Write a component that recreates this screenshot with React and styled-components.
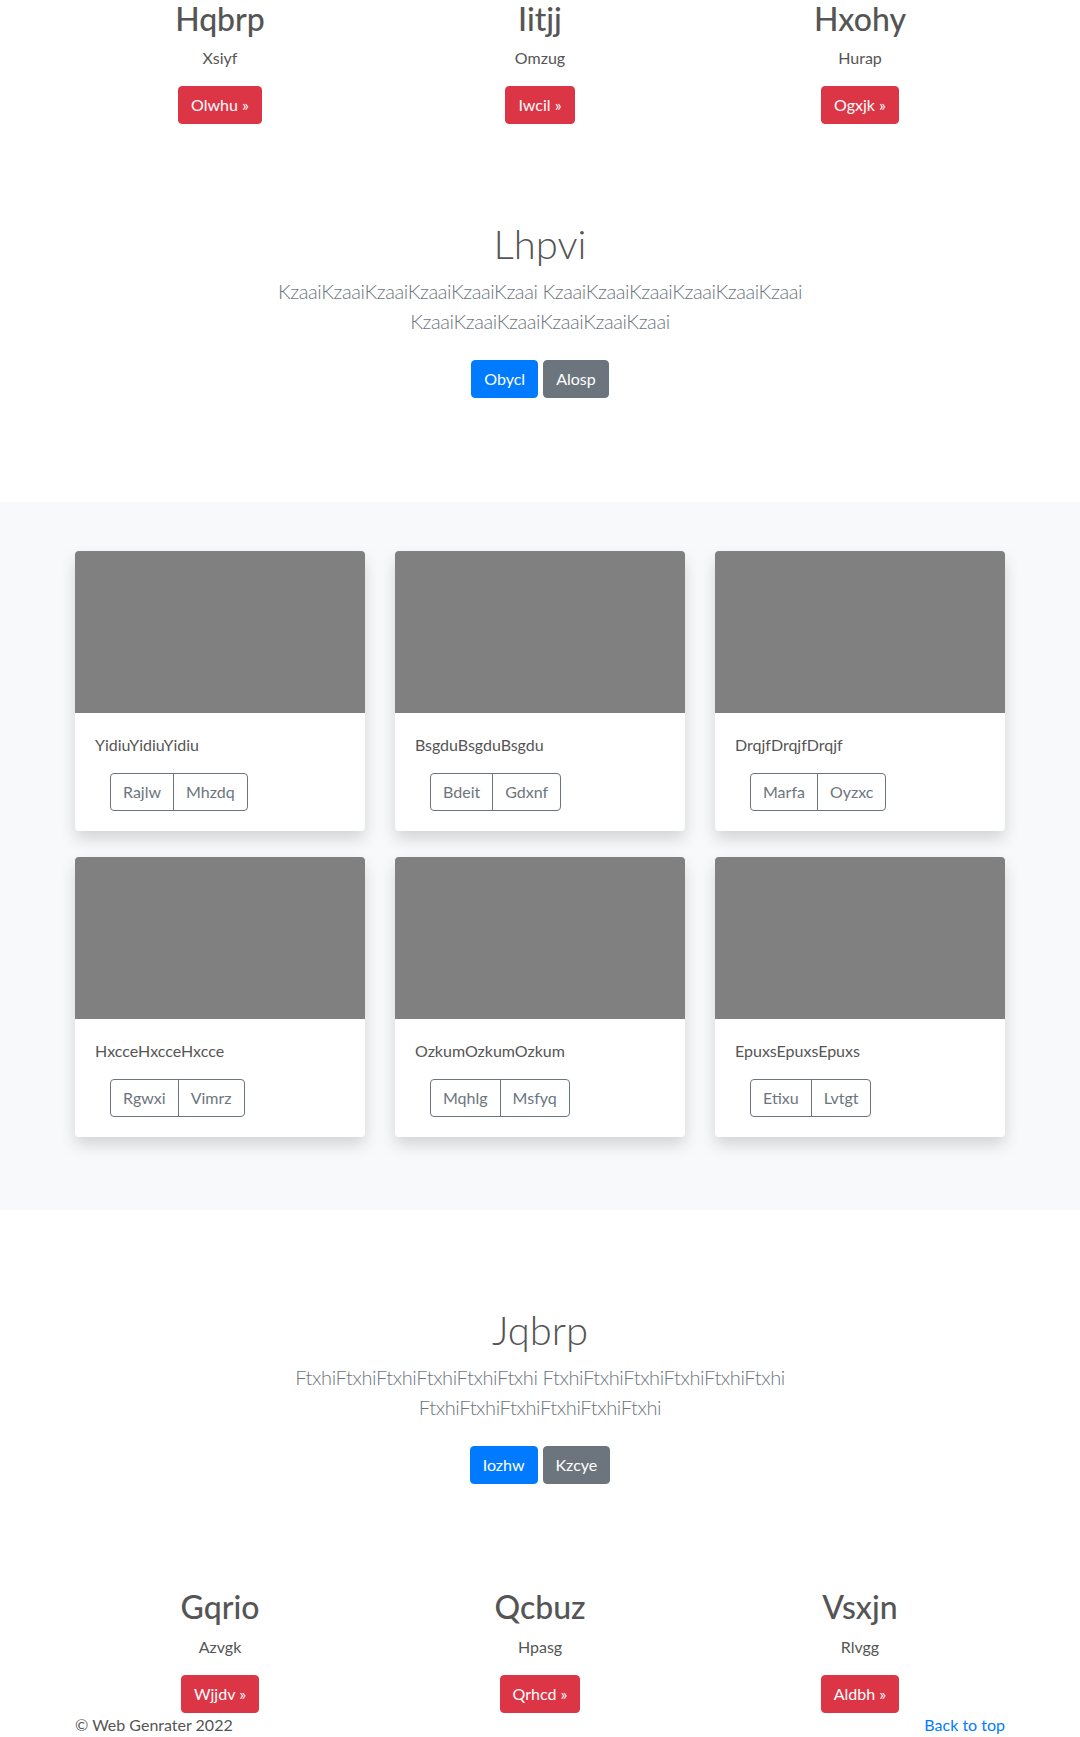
import styled, { createGlobalStyle } from "styled-components";

const GlobalStyle = createGlobalStyle`
  * { box-sizing: border-box; }
  body {
    margin: 0;
    font-family: "Lato", "Open Sans", sans-serif;
    font-size: 16px;
    line-height: 1.5;
    color: #555;
    background: #fff;
  }
`;

const Container = styled.div`
  width: 930px;
  margin: 0 auto;
`;

const FeatureRow = styled(Container)`
  display: grid;
  grid-template-columns: repeat(3, 1fr);
  column-gap: 30px;
  text-align: center;
  margin-bottom: ${(p) => p.$bottom || 0}px;
`;

const Feature = styled.div`
  display: flex;
  flex-direction: column;
  align-items: center;
`;

const FeatureTitle = styled.h2`
  margin: 0 0 8px;
  font-size: 32px;
  font-weight: 500;
  line-height: 1.2;
  color: #555;
`;

const FeatureText = styled.p`
  margin: 0 0 16px;
`;

const Button = styled.a`
  display: inline-block;
  padding: 6px 12px;
  font-size: 16px;
  line-height: 24px;
  border: 1px solid ${(p) => p.$color};
  border-radius: 4px;
  background: ${(p) => p.$color};
  color: #fff;
  text-decoration: none;
  cursor: pointer;
`;

const Jumbo = styled.section`
  padding: ${(p) => p.$top}px 0 104px;
  text-align: center;
`;

const JumboTitle = styled.h1`
  margin: 0 0 8px;
  font-size: 40px;
  font-weight: 300;
  line-height: 1.2;
  color: #555;
`;

const Lead = styled.p`
  max-width: 640px;
  margin: 0 auto 24px;
  font-size: 20px;
  font-weight: 300;
  line-height: 30px;
  letter-spacing: -0.4px;
  color: #6c757d;
`;

const JumboButtons = styled.div`
  display: flex;
  justify-content: center;
  gap: 5px;
`;

const Album = styled.section`
  background: #f8f9fa;
  padding: 49px 0 73px;
`;

const CardGrid = styled(Container)`
  display: grid;
  grid-template-columns: repeat(3, 1fr);
  column-gap: 30px;
  row-gap: 26px;
`;

const Card = styled.div`
  background: #fff;
  border-radius: 4px;
  overflow: hidden;
  box-shadow: 0 8px 16px rgba(0, 0, 0, 0.15);
`;

const Thumb = styled.div`
  height: 162px;
  background: #808080;
`;

const CardBody = styled.div`
  padding: 20px;
`;

const CardText = styled.p`
  margin: 0 0 16px;
  line-height: 24px;
`;

const BtnGroup = styled.div`
  display: inline-flex;
  margin-left: 15px;
`;

const OutlineBtn = styled.button`
  font-family: inherit;
  font-size: 16px;
  line-height: 24px;
  padding: 6px 12px;
  background: transparent;
  color: #6c757d;
  border: 1px solid #6c757d;
  border-radius: 0;
  cursor: pointer;

  &:first-child { border-radius: 4px 0 0 4px; }
  &:last-child { border-radius: 0 4px 4px 0; margin-left: -1px; }
`;

const Footer = styled(Container)`
  display: flex;
  justify-content: space-between;
  line-height: 24px;
`;

const TopLink = styled.a`
  color: #007bff;
  text-decoration: none;
`;

const topFeatures = [
  ["Hqbrp", "Xsiyf", "Olwhu"],
  ["Iitjj", "Omzug", "Iwcil"],
  ["Hxohy", "Hurap", "Ogxjk"],
];

const bottomFeatures = [
  ["Gqrio", "Azvgk", "Wjjdv"],
  ["Qcbuz", "Hpasg", "Qrhcd"],
  ["Vsxjn", "Rlvgg", "Aldbh"],
];

const cards = [
  ["YidiuYidiuYidiu", "Rajlw", "Mhzdq"],
  ["BsgduBsgduBsgdu", "Bdeit", "Gdxnf"],
  ["DrqjfDrqjfDrqjf", "Marfa", "Oyzxc"],
  ["HxcceHxcceHxcce", "Rgwxi", "Vimrz"],
  ["OzkumOzkumOzkum", "Mqhlg", "Msfyq"],
  ["EpuxsEpuxsEpuxs", "Etixu", "Lvtgt"],
];

const Features = ({ items, bottom }) => (
  <FeatureRow $bottom={bottom}>
    {items.map(([title, text, btn]) => (
      <Feature key={title}>
        <FeatureTitle>{title}</FeatureTitle>
        <FeatureText>{text}</FeatureText>
        <Button $color="#dc3545">{btn} &raquo;</Button>
      </Feature>
    ))}
  </FeatureRow>
);

const Hero = ({ top, title, word, primary, secondary }) => (
  <Jumbo $top={top}>
    <Container>
      <JumboTitle>{title}</JumboTitle>
      <Lead>
        {word.repeat(6)} {word.repeat(6)} {word.repeat(6)}
      </Lead>
      <JumboButtons>
        <Button $color="#007bff">{primary}</Button>
        <Button $color="#6c757d">{secondary}</Button>
      </JumboButtons>
    </Container>
  </Jumbo>
);

const App = () => {
  return (
    <>
      <GlobalStyle />
      <Features items={topFeatures} bottom={16} />
      <Hero top={80} title="Lhpvi" word="Kzaai" primary="Obycl" secondary="Alosp" />
      <Album>
        <CardGrid>
          {cards.map(([text, a, b]) => (
            <Card key={text}>
              <Thumb />
              <CardBody>
                <CardText>{text}</CardText>
                <BtnGroup>
                  <OutlineBtn>{a}</OutlineBtn>
                  <OutlineBtn>{b}</OutlineBtn>
                </BtnGroup>
              </CardBody>
            </Card>
          ))}
        </CardGrid>
      </Album>
      <Hero top={96} title="Jqbrp" word="Ftxhi" primary="Iozhw" secondary="Kzcye" />
      <Features items={bottomFeatures} />
      <Footer>
        <span>© Web Genrater 2022</span>
        <TopLink href="#">Back to top</TopLink>
      </Footer>
    </>
  );
};

export default App;
